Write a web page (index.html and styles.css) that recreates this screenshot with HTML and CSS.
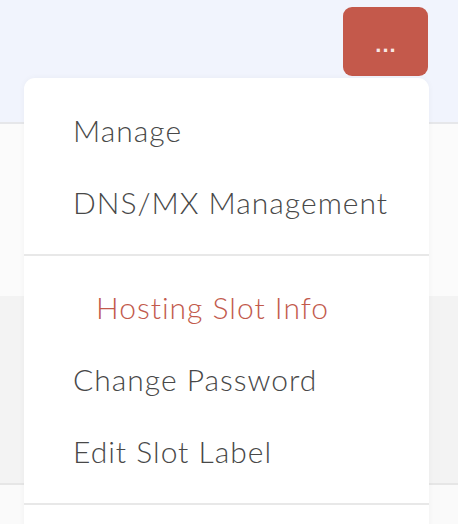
FILE: index.html
```html
<!DOCTYPE html>
<html>
<head>
<meta charset="utf-8">
<link rel="stylesheet" href="styles.css">
</head>
<body>
<div class="page">
  <header class="topbar">
    <button class="more-btn" type="button"><span class="dots">...</span></button>
  </header>
  <section class="band band-white"></section>
  <section class="band band-gray"></section>
  <section class="band band-rest"></section>

  <nav class="dropdown">
    <ul class="menu">
      <li class="item">Manage</li>
      <li class="item">DNS/MX Management</li>
    </ul>
    <hr class="divider">
    <ul class="menu">
      <li class="item item-active">Hosting Slot Info</li>
      <li class="item">Change Password</li>
      <li class="item">Edit Slot Label</li>
    </ul>
    <hr class="divider">
  </nav>
</div>
</body>
</html>
```

FILE: styles.css
```css
* { box-sizing: border-box; }
html, body { margin: 0; padding: 0; }
body {
  font-family: "Lato", "Open Sans", sans-serif;
  background: #ffffff;
  width: 458px;
  height: 524px;
  overflow: hidden;
}
.page {
  position: relative;
  width: 458px;
  height: 524px;
}
.topbar {
  height: 124px;
  background: #f1f4fd;
  border-bottom: 2px solid #e6e7ea;
  display: flex;
  justify-content: flex-end;
  align-items: flex-start;
  padding: 7px 30px 0 0;
}
.more-btn {
  width: 85px;
  height: 69px;
  border: none;
  border-radius: 9px;
  background: #c4594b;
  color: #f8e6e3;
  padding: 0;
  display: flex;
  justify-content: center;
  align-items: center;
}
.dots {
  font-family: "Liberation Sans", sans-serif;
  font-size: 22px;
  font-weight: bold;
  letter-spacing: 1px;
  padding-left: 1px;
  line-height: 1;
  position: relative;
  top: 3px;
}
.band-white {
  height: 172px;
  background: #fbfbfb;
}
.band-gray {
  height: 189px;
  background: #f3f3f3;
  border-bottom: 2px solid #e6e6e6;
}
.band-rest {
  height: 39px;
  background: #fafafa;
}
.dropdown {
  position: absolute;
  top: 78px;
  left: 24px;
  width: 405px;
  height: 460px;
  background: #ffffff;
  border-radius: 11px;
  box-shadow: 0 0 6px rgba(0, 0, 0, 0.04);
  padding-top: 16px;
}
.menu {
  list-style: none;
  margin: 0;
  padding: 0;
}
.item {
  height: 72px;
  line-height: 72px;
  padding-left: 49px;
  font-size: 30px;
  font-weight: 300;
  letter-spacing: 1px;
  color: #484848;
  white-space: nowrap;
}
.item-active {
  padding-left: 72px;
  color: #c25a4c;
}
.divider {
  margin: 16px 0 15px;
  border: none;
  height: 2px;
  background: #e8e8e8;
}
```
